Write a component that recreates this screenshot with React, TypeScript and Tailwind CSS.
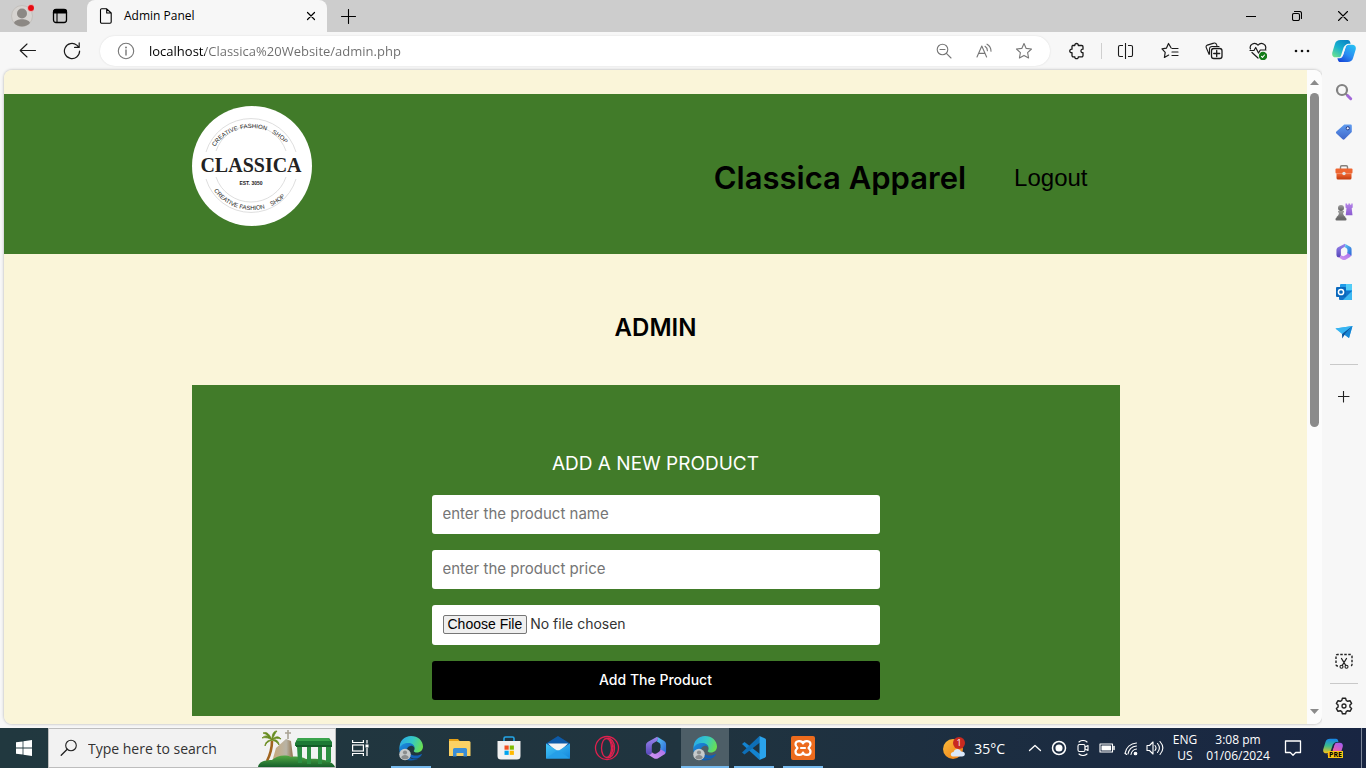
import type { ReactNode } from "react";

type IconProps = { size?: number; box?: number; className?: string; children: ReactNode };

function Line({ size = 18, box = 18, className = "", children }: IconProps) {
  return (
    <svg
      width={size}
      height={size}
      viewBox={`0 0 ${box} ${box}`}
      fill="none"
      stroke="currentColor"
      strokeWidth="1.1"
      strokeLinecap="round"
      strokeLinejoin="round"
      className={`shrink-0 ${className}`}
      aria-hidden="true"
    >
      {children}
    </svg>
  );
}

function Art({ size = 18, box = 18, className = "", children }: IconProps) {
  return (
    <svg width={size} height={size} viewBox={`0 0 ${box} ${box}`} className={`shrink-0 ${className}`} aria-hidden="true">
      {children}
    </svg>
  );
}

function IconButton({ label, className, children }: { label: string; className: string; children: ReactNode }) {
  return (
    <button type="button" aria-label={label} className={`flex shrink-0 items-center justify-center ${className}`}>
      {children}
    </button>
  );
}

function Gradients() {
  return (
    <svg width="0" height="0" className="absolute" aria-hidden="true">
      <defs>
        <linearGradient id="cpTeal" x1="0.8" y1="0" x2="0.1" y2="1">
          <stop offset="0" stopColor="#0a84c4" />
          <stop offset="0.5" stopColor="#17b1cf" />
          <stop offset="1" stopColor="#6ee38d" />
        </linearGradient>
        <linearGradient id="cpBlue" x1="0.9" y1="0" x2="0.2" y2="1">
          <stop offset="0" stopColor="#27c3f3" />
          <stop offset="0.55" stopColor="#2a8cf2" />
          <stop offset="1" stopColor="#1648d8" />
        </linearGradient>
        <linearGradient id="cpYellow" x1="0.4" y1="0" x2="0.3" y2="1">
          <stop offset="0" stopColor="#1787e8" />
          <stop offset="0.5" stopColor="#3dbd8a" />
          <stop offset="1" stopColor="#f5c21b" />
        </linearGradient>
        <linearGradient id="cpPink" x1="0.8" y1="0" x2="0.3" y2="1">
          <stop offset="0" stopColor="#a45cf0" />
          <stop offset="0.6" stopColor="#f05fa6" />
          <stop offset="1" stopColor="#f97a58" />
        </linearGradient>
        <linearGradient id="tag" x1="0" y1="0" x2="0" y2="1">
          <stop offset="0" stopColor="#5f9cf0" />
          <stop offset="1" stopColor="#3f66c9" />
        </linearGradient>
        <linearGradient id="kit" x1="0" y1="0" x2="0" y2="1">
          <stop offset="0" stopColor="#f26a35" />
          <stop offset="1" stopColor="#c23a0c" />
        </linearGradient>
        <linearGradient id="pawn" x1="0" y1="0" x2="0" y2="1">
          <stop offset="0" stopColor="#a0a0a0" />
          <stop offset="1" stopColor="#606060" />
        </linearGradient>
        <linearGradient id="rook" x1="0" y1="0" x2="0" y2="1">
          <stop offset="0" stopColor="#b583e8" />
          <stop offset="1" stopColor="#8a5bd0" />
        </linearGradient>
        <linearGradient id="mBlue" x1="0" y1="0" x2="1" y2="1">
          <stop offset="0" stopColor="#5ccbf5" />
          <stop offset="1" stopColor="#2b61d6" />
        </linearGradient>
        <linearGradient id="mViolet" x1="1" y1="0" x2="0" y2="1">
          <stop offset="0" stopColor="#a66be8" />
          <stop offset="1" stopColor="#d59bf2" />
        </linearGradient>
        <linearGradient id="mIndigo" x1="0" y1="0" x2="0" y2="1">
          <stop offset="0" stopColor="#9d86f0" />
          <stop offset="1" stopColor="#5546b8" />
        </linearGradient>
        <linearGradient id="edgeBlue" x1="0" y1="0" x2="1" y2="1">
          <stop offset="0" stopColor="#1d8fe0" />
          <stop offset="1" stopColor="#0b4fa3" />
        </linearGradient>
        <linearGradient id="edgeGreen" x1="0" y1="0.3" x2="1" y2="0.6">
          <stop offset="0" stopColor="#2aa9e8" />
          <stop offset="0.5" stopColor="#35c9c4" />
          <stop offset="1" stopColor="#6be04e" />
        </linearGradient>
        <linearGradient id="mail" x1="0" y1="0" x2="1" y2="1">
          <stop offset="0" stopColor="#43c6f7" />
          <stop offset="1" stopColor="#1587dc" />
        </linearGradient>
        <linearGradient id="sun" x1="0" y1="0" x2="1" y2="1">
          <stop offset="0" stopColor="#fbbd3c" />
          <stop offset="1" stopColor="#ef7a14" />
        </linearGradient>
        <linearGradient id="hill" x1="0" y1="0" x2="0" y2="1">
          <stop offset="0" stopColor="#55a844" />
          <stop offset="1" stopColor="#14602a" />
        </linearGradient>
        <linearGradient id="rock" x1="0" y1="0" x2="1" y2="0">
          <stop offset="0" stopColor="#c9a877" />
          <stop offset="0.65" stopColor="#b8b3a6" />
          <stop offset="1" stopColor="#8e6a3d" />
        </linearGradient>
      </defs>
    </svg>
  );
}

/* ---------- shared artwork ---------- */

function Copilot({ size = 24, warm = false }: { size?: number; warm?: boolean }) {
  return (
    <Art size={size} box={24}>
      <path
        d="M8.500 1h7.200c1.400 0 2 .9 2.400 2.100l.5 1.700h-2.300c-1.700 0-2.700.9-3.200 2.600l-2.600 8.100c-.6 1.900-1.500 2.800-3.500 2.800H3.800C1 18.300-.3 16.500.3 13.600L3 4.800C3.800 2.200 5.600 1 8.500 1Z"
        fill={warm ? "url(#cpYellow)" : "url(#cpTeal)"}
      />
      <path
        d="M15.500 23H8.300c-1.400 0-2-.9-2.400-2.100l-.5-1.700h2.300c1.700 0 2.700-.9 3.200-2.600l2.600-8.100c.6-1.900 1.500-2.800 3.500-2.800h3.200c2.800 0 4.100 1.800 3.500 4.700L21 19.200c-.8 2.600-2.600 3.800-5.500 3.800Z"
        fill={warm ? "url(#cpPink)" : "url(#cpBlue)"}
      />
      <path
        d="M11.600 8.600c.5-1.500 1.500-2.700 3.400-2.700-1 .8-1.200 1.700-1.500 2.700l-2.300 7.100c-.5 1.500-1.500 2.600-3.400 2.600 1-.8 1.200-1.600 1.500-2.600Z"
        fill={warm ? "#182542" : "#f7f7f7"}
      />
    </Art>
  );
}

function Edge() {
  return (
    <Art size={26} box={26}>
      <path d="M1.500 14C1 6 6.500 1 13 1c7 0 12 4.800 12 10.500 0 3.700-2.800 6-6 6-2 0-3.300-.7-3.300-1.500 0-.6.9-1 .9-2.600 0-2.200-2-3.900-4.800-3.900C7 9.500 2.600 11.200 1.500 14Z" fill="url(#edgeGreen)" />
      <path d="M1.300 13.500C2.600 9.800 6.500 8 10.300 8c3.500 0 6 1.700 6.200 4.700-1-1.400-2.400-2-4-1.800-2.400.3-4 2.500-4 5.300 0 4.800 4 8.300 9 8 1.700-.1 2.600-.4 3.900-1.100C18.600 25 15.500 25.500 13 25.500 6.300 25.500 1 20.500 1.300 13.500Z" fill="url(#edgeBlue)" />
      <path d="M9.500 15.500c-1 5 3.500 8.500 9 8 2.500-.3 4.300-2 5.300-3.700.3-.6-.2-.9-.7-.6-4.500 2.500-12.100 1.300-13.600-3.700Z" fill="#1260b8" />
      <circle cx="7" cy="19.500" r="5.800" fill="#c6cacb" />
      <circle cx="7" cy="17.500" r="2.100" fill="#8a8d8e" />
      <path d="M3.300 22.800c0-3.800 7.400-3.800 7.400 0-1.800 2-5.600 2-7.400 0Z" fill="#8a8d8e" />
    </Art>
  );
}

function Hexagon365({ size = 20 }: { size?: number }) {
  return (
    <Art size={size} box={20}>
      <path d="M11 .7 3.400 4.800C2.300 5.500 1.600 6.500 1.600 8v5c0 2 1.500 3.300 3.400 2.800 1-.3 1.500-1.200 1.500-2.300V8.500c0-1.200.5-2 1.500-2.600l2.500-1.500C12 3.500 12 1.700 11 .7Z" fill="url(#mIndigo)" />
      <path d="M3 15.300l5.200 3.200c1.200.7 2.400.7 3.600 0l5-3c1.500-1 1.700-3.200-.1-4.300L13.800 10c0 1.400-.4 2.600-1.200 3.100l-2 1.200c-1 .6-1.800.6-2.800 0l-1.300-.8c0 1.500-1.700 2.800-3.500 1.800Z" fill="url(#mViolet)" />
      <path d="M11 .7c1 1 1 2.800-.5 3.700l2 1.200c.9.6 1.300 1.300 1.300 2.400v3l2.900 1.700c.9.5 1.300 1.300 1 2.300.5-.6.7-1.300.7-2.200V7c0-1.300-.5-2.200-1.600-2.900Z" fill="url(#mBlue)" />
    </Art>
  );
}

function ShopLogo() {
  return (
    <svg viewBox="0 0 120 120" className="size-30 shrink-0" role="img" aria-label="Classica creative fashion shop">
      <defs>
        <path id="arcTop" d="M17 60a42 38 0 0 1 84 0" />
        <path id="arcBottom" d="M14 60a46 44 0 0 0 92 0" />
      </defs>
      <circle cx="60" cy="60" r="60" fill="#fff" />
      <g fill="none" stroke="#d6d6d6" strokeWidth="0.8">
        <path d="M14 46a47 47 0 0 1 90 0M14 73a47 47 0 0 0 90 0" />
        <path d="M24 45a37 37 0 0 1 70 0M24 71a37 37 0 0 0 70 0" />
      </g>
      <g fill="#222" fontFamily="'Liberation Sans', sans-serif" fontSize="6" textAnchor="middle">
        <text><textPath href="#arcTop" startOffset="28%">CREATIVE</textPath></text>
        <text><textPath href="#arcTop" startOffset="52%">FASHION</textPath></text>
        <text><textPath href="#arcTop" startOffset="74%">SHOP</textPath></text>
        <text><textPath href="#arcBottom" startOffset="29%">CREATIVE</textPath></text>
        <text><textPath href="#arcBottom" startOffset="50%">FASHION</textPath></text>
        <text><textPath href="#arcBottom" startOffset="70%">SHOP</textPath></text>
      </g>
      <text x="59" y="66" textAnchor="middle" fontFamily="'Liberation Serif', serif" fontWeight="700" fontSize="20" fill="#222">CLASSICA</text>
      <text x="59" y="79" textAnchor="middle" fontFamily="'Liberation Sans', sans-serif" fontWeight="700" fontSize="5" fill="#222">EST. 3050</text>
    </svg>
  );
}

/* ---------- browser frame ---------- */

function TabStrip() {
  return (
    <div className="flex h-8 shrink-0 items-stretch bg-[#cdcdcd] text-black">
      <IconButton label="Profile" className="w-11">
        <Art size={24} box={24}>
          <circle cx="12" cy="12" r="10.500" fill="#d6d3d0" stroke="#c3c0bc" />
          <circle cx="12" cy="9.500" r="5" fill="#8c8884" />
          <path d="M4 19c1.500-5 14.500-5 16 0-3.500 4.600-12.500 4.600-16 0Z" fill="#8c8884" />
          <circle cx="21" cy="4" r="3.500" fill="#e60b12" stroke="#eee" strokeWidth="0.600" />
        </Art>
      </IconButton>
      <IconButton label="Tab actions" className="mr-[11px] w-8">
        <Line size={16} box={16}>
          <rect x="1.500" y="1.500" width="13" height="13" rx="2.500" strokeWidth="1.300" />
          <path d="M1.500 5V4A2.500 2.500 0 0 1 4 1.500h8A2.500 2.500 0 0 1 14.500 4v1Z" fill="currentColor" />
          <path d="M5 5v9" />
        </Line>
      </IconButton>
      <div className="flex w-60 items-center rounded-t-lg bg-[#f7f7f7] pr-2 pl-3">
        <Line size={16} box={16} className="text-black">
          <path d="M1.500 2A1.200 1.200 0 0 1 2.700.8h5L12.200 5v9a1.200 1.200 0 0 1-1.200 1.200H2.700A1.200 1.200 0 0 1 1.500 14ZM7.700.8V5h4.500" />
        </Line>
        <span className="ml-[9px] flex-1 text-[12px]">Admin Panel</span>
        <IconButton label="Close tab" className="size-4">
          <Line size={10} box={10}><path d="m1.500 1.500 7 7M8.500 1.500l-7 7" strokeWidth="1.200" /></Line>
        </IconButton>
      </div>
      <IconButton label="New tab" className="w-[43px]">
        <Line size={15} box={15}><path d="M7.500.5v14M.5 7.500h14" /></Line>
      </IconButton>
      <div className="flex-1" />
      <IconButton label="Minimize" className="w-[46px]">
        <Line size={10} box={10}><path d="M0 5.500h10" /></Line>
      </IconButton>
      <IconButton label="Restore" className="w-[46px]">
        <Line size={10} box={10}>
          <rect x=".5" y="2.500" width="7" height="7" rx="1.500" />
          <path d="M2.500.5h5a2 2 0 0 1 2 2v5" />
        </Line>
      </IconButton>
      <IconButton label="Close" className="w-[46px]">
        <Line size={10} box={10}><path d="m.5.5 9 9M9.500.5l-9 9" /></Line>
      </IconButton>
    </div>
  );
}

const STAR = "m9 1.500 2.200 4.900 5.300.6-3.900 3.700 1 5.300L9 13.400 4.400 16l1-5.300L1.500 7l5.300-.6Z";

function Toolbar() {
  return (
    <div className="flex h-[38px] shrink-0 items-center bg-[#f7f7f7] pr-0.5 pl-1.5 text-[#1b1b1b]">
      <IconButton label="Back" className="h-8 w-11">
        <Line><path d="M16.500 8.500h-15M8 2 1.200 8.500 8 15" /></Line>
      </IconButton>
      <IconButton label="Refresh" className="h-8 w-11">
        <Line><path d="M16.600 9A7.600 7.600 0 1 1 13.800 3.100L16 5.200M16.200.9v4.500h-4.600" strokeWidth="1.200" /></Line>
      </IconButton>
      <div className="mr-[5px] ml-1.5 flex h-[30px] min-w-0 flex-1 items-center rounded-full bg-white pr-1.5 pl-[17px] text-[#777] shadow-[0_0_2px_rgba(0,0,0,0.12)]">
        <Line>
          <circle cx="9" cy="9" r="7.700" />
          <path d="M9 8v5" strokeWidth="1.400" />
          <circle cx="9" cy="5.500" r=".4" fill="currentColor" />
        </Line>
        <input
          aria-label="Address"
          defaultValue="localhost/Classica%20Website/admin.php"
          className="ml-[14px] min-w-0 flex-1 bg-[linear-gradient(90deg,#000_56px,#6c6c6c_56px)] bg-clip-text pt-0.5 text-[13px] text-transparent outline-none"
        />
        <IconButton label="Zoom" className="h-7 w-10">
          <Line size={16} box={16}><circle cx="6.500" cy="6.500" r="5.300" /><path d="m10.400 10.400 4.600 4.600M4 6.500h5" /></Line>
        </IconButton>
        <IconButton label="Read aloud" className="h-7 w-10">
          <Line size={16} box={16}>
            <path d="M1 14 5.800 3l4.800 11M2.700 10.400h6.200M9 3.300c1.600 1 2.400 2.400 2.400 4.400M11 1.200c2.600 1.400 4 3.700 4 7" />
          </Line>
        </IconButton>
        <IconButton label="Add to favorites" className="h-7 w-10">
          <Line><path d={STAR} /></Line>
        </IconButton>
      </div>
      <IconButton label="Extensions" className="h-8 w-11">
        <Line>
          <path d="M4.500 3.500h2.300c-.4-2.700 3.900-2.700 3.500 0h3.400A1.300 1.300 0 0 1 15 4.800v2.400c-2.700-.3-2.700 3.800 0 3.500v2.800a1.300 1.300 0 0 1-1.300 1.300h-3.400c.4 2.500-3.900 2.500-3.500 0H5.300A1.300 1.300 0 0 1 4 13.500v-2.800c-3 .3-3-3.800 0-3.500V4.500a1 1 0 0 1 .5-1Z" strokeWidth="1.300" />
        </Line>
      </IconButton>
      <div className="mx-0.5 h-4 w-px bg-[#cfcfcf]" />
      <IconButton label="Split screen" className="h-8 w-11">
        <Line><path d="M8.500 1v16M6 3.500H3A1.500 1.500 0 0 0 1.500 5v8A1.500 1.500 0 0 0 3 14.500h3M11 3.500h3A1.500 1.500 0 0 1 15.500 5v8a1.500 1.500 0 0 1-1.500 1.500h-3" strokeLinecap="butt" /></Line>
      </IconButton>
      <IconButton label="Favorites" className="h-8 w-11">
        <Line><path d="M10 5.800 7.500 1.500 5.400 6.200 1 6.800l3.200 3.500-.8 5.200 4.300-2.400M11 6.500h6M11 10h6M11 13.500h6" strokeWidth="1.200" /></Line>
      </IconButton>
      <IconButton label="Collections" className="h-8 w-11">
        <Line>
          <path d="M4.200 12.500 1.300 5.700a2 2 0 0 1 1-2.600l6.500-2a2 2 0 0 1 2.600 1.200l.5 1.200M4.500 11.500V7A2.500 2.500 0 0 1 7 4.500h7" />
          <rect x="6.500" y="6.500" width="10.500" height="10" rx="2.300" strokeWidth="1.300" />
          <path d="M11.700 8.500v6M8.700 11.500h6" strokeWidth="1.300" />
        </Line>
      </IconButton>
      <IconButton label="Browser essentials" className="h-8 w-11">
        <Line>
          <path d="M1.500 7C-.2 2.500 5.800-.5 9 3.200 12.200-.5 18 2.500 16.500 7M3 10.500 9 16M1 8.500h4l1.700-3L9.500 11l1.800-3H17" strokeWidth="1.200" />
          <circle cx="14" cy="14" r="3.600" fill="#137c18" stroke="#137c18" />
          <path d="m12.500 14.300 1 1 2-2.300" stroke="#fff" />
        </Line>
      </IconButton>
      <IconButton label="More" className="h-8 w-11">
        <Art><g fill="#111"><circle cx="3" cy="9" r="1.300" /><circle cx="9" cy="9" r="1.300" /><circle cx="15" cy="9" r="1.300" /></g></Art>
      </IconButton>
      <IconButton label="Copilot" className="h-8 w-10">
        <Copilot />
      </IconButton>
    </div>
  );
}

function SidebarApps() {
  const apps: { label: string; icon: ReactNode }[] = [
    {
      label: "Search",
      icon: (
        <Art>
          <circle cx="7" cy="7" r="5" fill="none" stroke="#828282" strokeWidth="2.200" />
          <path d="m10.700 10.700 1.800 1.800" stroke="#828282" strokeWidth="2.200" />
          <path d="m12.700 12.700 3 3" stroke="#a268d8" strokeWidth="3" strokeLinecap="round" />
        </Art>
      ),
    },
    {
      label: "Shopping",
      icon: (
        <Art>
          <path d="M9.300 1.500h6.200c.8 0 1.300.5 1.300 1.300V9L9.500 16.300c-.6.600-1.300.600-1.900 0L1.400 10.500c-.6-.6-.6-1.300 0-1.900Z" fill="url(#tag)" />
          <circle cx="12.800" cy="5.300" r="1.600" fill="#eaf0ff" stroke="#263c87" />
        </Art>
      ),
    },
    {
      label: "Tools",
      icon: (
        <Art>
          <path d="M5.500 6V4c0-.8.400-1.200 1.200-1.200h4.600c.8 0 1.200.4 1.200 1.200v2" fill="none" stroke="#85807c" strokeWidth="1.400" />
          <rect x=".5" y="5.500" width="17" height="5" rx="1" fill="#ee6530" />
          <path d="M1.500 10.500h15V15a1.500 1.500 0 0 1-1.500 1.500H3A1.500 1.500 0 0 1 1.500 15Z" fill="url(#kit)" />
          <circle cx="9" cy="10.500" r="1.700" fill="#e3e3e3" />
        </Art>
      ),
    },
    {
      label: "Games",
      icon: (
        <Art>
          <path d="M10.500.5h1.600v1.200h1.300V.5h1.700v1.200h1.200V.5h1.400v4l-1 .8.800 7h-6.800l.8-7-1-.8Z" fill="url(#rook)" />
          <circle cx="6" cy="5" r="3" fill="url(#pawn)" />
          <path d="M3 8h6v1.500H8c.1 2 .7 3.200 2.500 4.500v2H1.500v-2C3.300 12.700 3.900 11.500 4 9.500H3Z" fill="url(#pawn)" />
          <rect x=".5" y="15" width="11" height="2.500" rx="1" fill="#6a6a6a" />
        </Art>
      ),
    },
    { label: "Microsoft 365", icon: <Hexagon365 size={18} /> },
    {
      label: "Outlook",
      icon: (
        <Art>
          <rect x="5" y="1" width="12" height="10" rx="1" fill="#1f9be8" />
          <path d="M11 1h5a1 1 0 0 1 1 1v5h-6Z" fill="#52cdf7" />
          <path d="M4 8h13v8a1 1 0 0 1-1 1H5a1 1 0 0 1-1-1Z" fill="#1272c9" />
          <path d="m17 8-9 9h8a1 1 0 0 0 1-1Z" fill="#3cb8f2" />
          <rect x="1" y="4" width="10" height="10" rx="1" fill="#0968bd" />
          <circle cx="6" cy="9" r="2.600" fill="none" stroke="#fff" strokeWidth="1.500" />
        </Art>
      ),
    },
    {
      label: "Drop",
      icon: (
        <Art>
          <path d="m.5 5.500 17-2.500-3.500 12-5-3.500Z" fill="#2aa3ea" />
          <path d="m.5 5.500 17-2.500L7 11Z" fill="#37b5f2" />
          <path d="M7 11 17.500 3 9.500 12l-2.300 3.500Z" fill="#0c569e" />
          <path d="M9.500 11.500 17.500 3 14 15Z" fill="#1484d4" />
        </Art>
      ),
    },
  ];
  return (
    <aside className="flex w-11 shrink-0 flex-col items-center bg-[#f7f7f7] pt-0.5 text-[#222]">
      {apps.map((app) => (
        <IconButton key={app.label} label={app.label} className="size-10">
          {app.icon}
        </IconButton>
      ))}
      <div className="mt-3 h-px w-7 bg-[#c9c9c9]" />
      <IconButton label="Customize" className="mt-3 size-10">
        <Line size={12} box={12}><path d="M5.500 0v11M0 5.500h11" /></Line>
      </IconButton>
      <div className="flex-1" />
      <IconButton label="Screenshot" className="size-10">
        <Line>
          <path d="M3 14h-.500a1.500 1.500 0 0 1-1.500-1.500V4a1.500 1.500 0 0 1 1.500-1.500h13A1.500 1.500 0 0 1 17 4v8.500a1.500 1.500 0 0 1-1.500 1.500H15" strokeDasharray="2.500 1.500" strokeWidth="1.400" strokeLinecap="butt" />
          <path d="m6.500 6.500 4.300 7M11.500 6.500l-4.300 7" strokeWidth="1.300" />
          <circle cx="6.500" cy="14.700" r="1.500" /><circle cx="11.500" cy="14.700" r="1.500" />
        </Line>
      </IconButton>
      <div className="mt-0.5 h-px w-7 bg-[#c9c9c9]" />
      <IconButton label="Settings" className="mt-0.5 mb-0.5 size-10">
        <Line>
          <path d="M7.400 1.200h3.200l.6 2.200 1.500.9 2.300-.6 1.600 2.700-1.700 1.700v1.800l1.700 1.700-1.600 2.700-2.300-.6-1.500.9-.6 2.200H7.400l-.6-2.200-1.500-.9-2.300.6-1.600-2.700 1.700-1.700V8.100L1.400 6.400 3 3.700l2.300.6 1.500-.9Z" strokeWidth="1.400" />
          <circle cx="9" cy="9" r="2" strokeWidth="1.300" />
        </Line>
      </IconButton>
    </aside>
  );
}

function ScrollBar() {
  return (
    <div className="flex w-[15px] shrink-0 flex-col items-center bg-[#fcfcfc] py-2.5" aria-hidden="true">
      <svg width="9" height="5" viewBox="0 0 9 5"><path d="M4.500 0 9 5H0Z" fill="#8b8b8b" /></svg>
      <div className="mt-2 h-[334px] w-[9px] rounded-full bg-[#8b8b8b]" />
      <div className="flex-1" />
      <svg width="9" height="5" viewBox="0 0 9 5"><path d="M4.500 5 9 0H0Z" fill="#8b8b8b" /></svg>
    </div>
  );
}

/* ---------- web page ---------- */

const FIELD = "h-[39px] w-full rounded-[3px] bg-white px-[11px] pb-0.5 text-[15px] outline-none";

function AdminPage() {
  return (
    <main className="min-w-0 flex-1 overflow-hidden bg-[#faf5d9] pt-6 font-[Inter,sans-serif] text-black">
      <header className="h-40 bg-[#417b29] pt-3">
        <div className="mx-auto flex max-w-[928px] items-start justify-between">
          <ShopLogo />
          <nav className="mt-[46px] mr-8 flex items-center gap-12">
            <h1 className="text-[31px] leading-[52px] font-semibold">Classica Apparel</h1>
            <a href="#logout" className="font-['Liberation_Sans',sans-serif] text-[24px] leading-[52px]">Logout</a>
          </nav>
        </div>
      </header>
      <h2 className="pt-14 text-center text-[24px] leading-9 font-semibold">ADMIN</h2>
      <section className="mx-auto mt-[39px] max-w-[928px] bg-[#417b29] pt-16 pb-4">
        <form className="mx-auto flex max-w-[448px] flex-col gap-4" onSubmit={(event) => event.preventDefault()}>
          <h3 className="text-center text-[19px] leading-[30px] text-white">ADD A NEW PRODUCT</h3>
          <input type="text" aria-label="Product name" placeholder="enter the product name" className={`${FIELD} placeholder:text-[#757575]`} />
          <input type="text" aria-label="Product price" placeholder="enter the product price" className={`${FIELD} placeholder:text-[#757575]`} />
          <input
            type="file"
            aria-label="Product image"
            className="h-10 w-full rounded-[3px] bg-white px-[11px] py-[9px] text-[14px] leading-5 text-[#333] file:mr-[3px] file:h-[19px] file:rounded-[2px] file:border file:border-solid file:border-[#767676] file:bg-[#efefef] file:px-1 file:font-['Liberation_Sans',sans-serif] file:text-[14px] file:leading-4 file:text-black"
          />
          <button type="submit" className="h-[39px] rounded-[3px] bg-black pb-0.5 text-[14px] font-medium text-white">
            Add The Product
          </button>
        </form>
      </section>
    </main>
  );
}

/* ---------- taskbar ---------- */

function SearchArt() {
  return (
    <svg width="77" height="38" viewBox="0 0 77 38" className="shrink-0" aria-hidden="true">
      <path d="m14 33 4-14 10-9 5 2 3 24Z" fill="url(#rock)" />
      <path d="M30 1v9M27 4h6" stroke="#a9a394" strokeWidth="1.600" />
      <path d="M9 32c3-6 5-13 5-20" fill="none" stroke="#a0641f" strokeWidth="2.600" />
      <path d="M14 11C11 6 7 6 4 9c4-1 7 0 10 2Zm0 0C12 6 9 2 5 4c4 1 6 4 9 7Zm0 0C14 6 15 2 19 2c-2 2-3 5-5 9Zm0 0c3-4 7-4 9-1-3-1-6-1-9 1Zm0 0c4-1 7 1 7 5-2-3-4-4-7-5Zm0 0c-4 0-7 2-7 6 1-3 4-5 7-6Z" fill="#5e8e22" stroke="#6f8a1d" strokeWidth="0.800" />
      <path d="M0 38c1-6 8-7 14-7 4-4 13-6 19-3 6-1 12 0 15 2 10-1 26 0 29 8Z" fill="url(#hill)" />
      <path d="M37 14 40 9h31l3 4v4H37Z" fill="#1d7a35" />
      <path d="M40 9h31l1 3H38Z" fill="#3aa34c" />
      <path d="M39 17h5v17h-4Zm10 0h4v18h-4Zm11 0h4v18h-4Zm8 0h5v16h-5Z" fill="#2d8f42" />
      <path d="M38 16h36v2H38Z" fill="#135c28" />
    </svg>
  );
}

function Taskbar() {
  const apps: { label: string; open: boolean; active?: boolean; icon: ReactNode }[] = [
    { label: "Microsoft Edge", open: true, icon: <Edge /> },
    {
      label: "File Explorer",
      open: false,
      icon: (
        <Art size={24} box={24}>
          <path d="M1 3h9l2 2.500H1Z" fill="#e6a117" />
          <path d="M1 5h20a1.500 1.500 0 0 1 1.500 1.500V20H1Z" fill="#fbd164" />
          <path d="M5 20.500v-7A1.500 1.500 0 0 1 6.500 12h11a1.500 1.500 0 0 1 1.500 1.500v7h-3.500V17h-7v3.500Z" fill="#3b8ed6" />
        </Art>
      ),
    },
    {
      label: "Microsoft Store",
      open: false,
      icon: (
        <Art size={26} box={26}>
          <path d="M8 7V3.500C8 2.600 8.600 2 9.500 2h7c.9 0 1.500.6 1.500 1.500V7" fill="none" stroke="#24a5e6" strokeWidth="1.600" />
          <path d="M1.500 6h23v15a3.500 3.500 0 0 1-3.500 3.500H5A3.500 3.500 0 0 1 1.500 21Z" fill="#f1f1f1" />
          <path d="M8.500 10.500h4.200v4.200H8.500Z" fill="#f25022" />
          <path d="M13.700 10.500h4.200v4.200h-4.200Z" fill="#7fba00" />
          <path d="M8.500 15.700h4.200v4.200H8.500Z" fill="#00a4ef" />
          <path d="M13.700 15.700h4.200v4.200h-4.200Z" fill="#ffb900" />
        </Art>
      ),
    },
    {
      label: "Mail",
      open: false,
      icon: (
        <Art size={26} box={26}>
          <path d="M1 8.500 13 1l12 7.500-4 6H5Z" fill="#0d5aa8" />
          <path d="M3 8.500h20L13 18Z" fill="#f4f4f4" />
          <path d="M1 8.500 13 16l12-7.500v15H1Z" fill="url(#mail)" />
          <path d="m1 23.500 12-8.500 12 8.500Z" fill="#259fe8" />
        </Art>
      ),
    },
    {
      label: "Opera",
      open: false,
      icon: (
        <Art size={26} box={26}>
          <g fill="none" stroke="#e0204e" strokeWidth="1.300">
            <circle cx="13" cy="13" r="11.500" />
            <ellipse cx="12.500" cy="13" rx="5" ry="9.500" />
            <path d="M12.500 3.500c5-1.500 8 4 8 9.500s-3 11-8 9.500M15.500 4.500c4.500 5 4.500 12 0 17" />
          </g>
        </Art>
      ),
    },
    { label: "Microsoft 365", open: false, icon: <Hexagon365 size={24} /> },
    { label: "Microsoft Edge, Admin Panel", open: true, active: true, icon: <Edge /> },
    {
      label: "Visual Studio Code",
      open: true,
      icon: (
        <Art size={26} box={26}>
          <path d="m1 9 2.500-2L19 19l-.500 6Z" fill="#1383cf" />
          <path d="M1 17.500 18.500 1 19 7.500 3.500 19.500Z" fill="#0e6fb8" />
          <path d="m18.500 1 5.600 2.500c.6.300.9.700.9 1.300v16.400c0 .6-.3 1-.9 1.300L18.500 25Z" fill="#2aa3ec" />
        </Art>
      ),
    },
    {
      label: "XAMPP",
      open: true,
      icon: (
        <Art size={26} box={26}>
          <rect x="1" y="1" width="24" height="24" rx="2" fill="#ec6b1d" />
          <path
            d="M13 8.500C12 5 5.500 5.200 5.500 9.300c0 1.700 1 2.700 2 3.700-1 1-2 2-2 3.700 0 4.100 6.500 4.300 7.500.8 1 3.500 7.500 3.300 7.500-.8 0-1.700-1-2.700-2-3.700 1-1 2-2 2-3.700C20.500 5.200 14 5 13 8.500ZM11 13h4"
            stroke="#fff"
            strokeWidth="2.200"
            fill="none"
            strokeLinecap="round"
            strokeLinejoin="round"
          />
        </Art>
      ),
    },
  ];

  return (
    <footer className="flex h-10 shrink-0 items-stretch bg-linear-to-r from-[#21383f] via-[#20343f] to-[#182542] text-white">
      <IconButton label="Start" className="w-12">
        <Art size={16} box={16}>
          <path d="m0 2.300 6.600-.9v6.200H0ZM7.400 1.300 16 0v7.600H7.400ZM0 8.400h6.600v6.200L0 13.700Zm7.400 0H16V16l-8.600-1.200Z" fill="#fff" />
        </Art>
      </IconButton>
      <label className="flex w-72 shrink-0 items-center border border-[#bdbdbd] bg-[#f2f2f2] pl-[11px] text-[#222]">
        <Line><circle cx="11" cy="6.500" r="5.300" /><path d="m7.200 10.300-6 6" strokeWidth="1.300" /></Line>
        <input aria-label="Search" placeholder="Type here to search" className="ml-2.5 min-w-0 flex-1 bg-transparent text-[14px] outline-none placeholder:text-[#333]" />
        <SearchArt />
      </label>
      <IconButton label="Task view" className="mr-[3px] w-12">
        <svg width="17" height="16" viewBox="0 0 17 16" fill="none" stroke="#fff" strokeWidth="1.200" aria-hidden="true">
          <path d="M.6 0v2.500h10.800V0M.6 16v-2.500h10.800V16M15 0v3.500M15 8v8" />
          <rect x=".6" y="5" width="10.800" height="6" />
          <path d="M13.500 4.500h3v3h-3Z" fill="#fff" stroke="none" />
        </svg>
      </IconButton>
      <div className="flex gap-px">
        {apps.map((app) => (
          <button
            key={app.label}
            type="button"
            aria-label={app.label}
            className={`flex w-12 flex-col items-center ${app.active ? "bg-[#4d5e67]" : ""}`}
          >
            <span className="flex h-[38px] items-center pt-0.5">{app.icon}</span>
            {app.open && <span className={`h-0.5 bg-[#76b9ed] ${app.active ? "w-12" : "w-10"}`} />}
          </button>
        ))}
      </div>
      <div className="flex-1" />
      <button type="button" className="mr-[18px] flex items-center gap-2 text-[14px]">
        <Art size={24} box={24}>
          <circle cx="11" cy="13" r="10" fill="url(#sun)" />
          <path d="M11 20.500c-3 0-3-4.500.5-4.500 1-4 6.500-4 7.500-.5 5-.3 5 5 1 5Z" fill="#dbe8fa" />
          <circle cx="17" cy="7" r="6" fill="#c92a20" />
          <text x="17" y="10" textAnchor="middle" fontSize="9" fontFamily="'Open Sans', sans-serif" fill="#fff">1</text>
        </Art>
        35°C
      </button>
      <IconButton label="Show hidden icons" className="w-6">
        <Line size={14} box={14}><path d="m1.500 9.500 5.500-5 5.500 5" strokeWidth="1.300" /></Line>
      </IconButton>
      <IconButton label="Recorder" className="w-6">
        <Line size={16} box={16}><circle cx="8" cy="8" r="6.500" strokeWidth="1.500" /><circle cx="8" cy="8" r="3" fill="#fff" /></Line>
      </IconButton>
      <IconButton label="Meet now" className="w-6">
        <Line size={16} box={16}>
          <rect x="3" y="4.500" width="7" height="7" rx="1.500" />
          <path d="m10 7 3-1.500v5L10 9M4 2C6 0 10 0 12 2M4 14c2 2 6 2 8 0" />
        </Line>
      </IconButton>
      <IconButton label="Battery" className="w-6">
        <Line size={16} box={16}><rect x="1" y="4" width="12.500" height="8" /><path d="M3 6h8.500v4H3Z" fill="#fff" /><path d="M15 6.500v3" strokeWidth="1.500" /></Line>
      </IconButton>
      <IconButton label="Network" className="w-6">
        <Line size={16} box={16}>
          <path d="M2 13.500C3 7.500 7.500 3.500 13.500 3M5 14c.8-4.300 4-7.500 8.500-8M8 14.500c.5-2.900 2.500-5 5.500-5.500M3.500 14.500 2 13" />
          <circle cx="12.500" cy="13.500" r="1.300" fill="#fff" />
        </Line>
      </IconButton>
      <IconButton label="Volume" className="w-6">
        <Line><path d="M1 6.500h2.500L7 3v12l-3.500-3.500H1ZM9 6.500c1.200 1.500 1.200 3.500 0 5M11.500 4.500c2.300 2.700 2.300 6.300 0 9M14 2.500c3.500 4 3.500 9 0 13" /></Line>
      </IconButton>
      <button type="button" className="w-9 text-center text-[12px] leading-4">ENG<br />US</button>
      <button type="button" className="w-[70px] text-center text-[12px] leading-4 whitespace-nowrap">3:08 pm<br />01/06/2024</button>
      <IconButton label="Notifications" className="w-10">
        <Line><path d="M1.500 2h15v11.500h-4.800L9 16.200l-2.700-2.700H1.500Z" strokeWidth="1.300" /></Line>
      </IconButton>
      <button type="button" aria-label="Copilot preview" className="relative mr-2 flex w-10 items-center justify-center">
        <Copilot size={20} warm />
        <span className="absolute top-[23px] left-[15px] bg-[#f8c513] px-px text-[7px] leading-[7px] font-bold text-black">PRE</span>
      </button>
      <div className="mr-1 w-px bg-[#7c8698]" />
    </footer>
  );
}

export default function App() {
  return (
    <div className="flex h-screen flex-col overflow-hidden bg-[#f7f7f7] font-['Open_Sans',sans-serif]">
      <Gradients />
      <TabStrip />
      <Toolbar />
      <div className="flex min-h-0 flex-1">
        <div className="mb-1 ml-1 flex min-w-0 flex-1 overflow-hidden rounded-lg shadow-[0_0_3px_rgba(0,0,0,0.3)]">
          <AdminPage />
          <ScrollBar />
        </div>
        <SidebarApps />
      </div>
      <Taskbar />
    </div>
  );
}
